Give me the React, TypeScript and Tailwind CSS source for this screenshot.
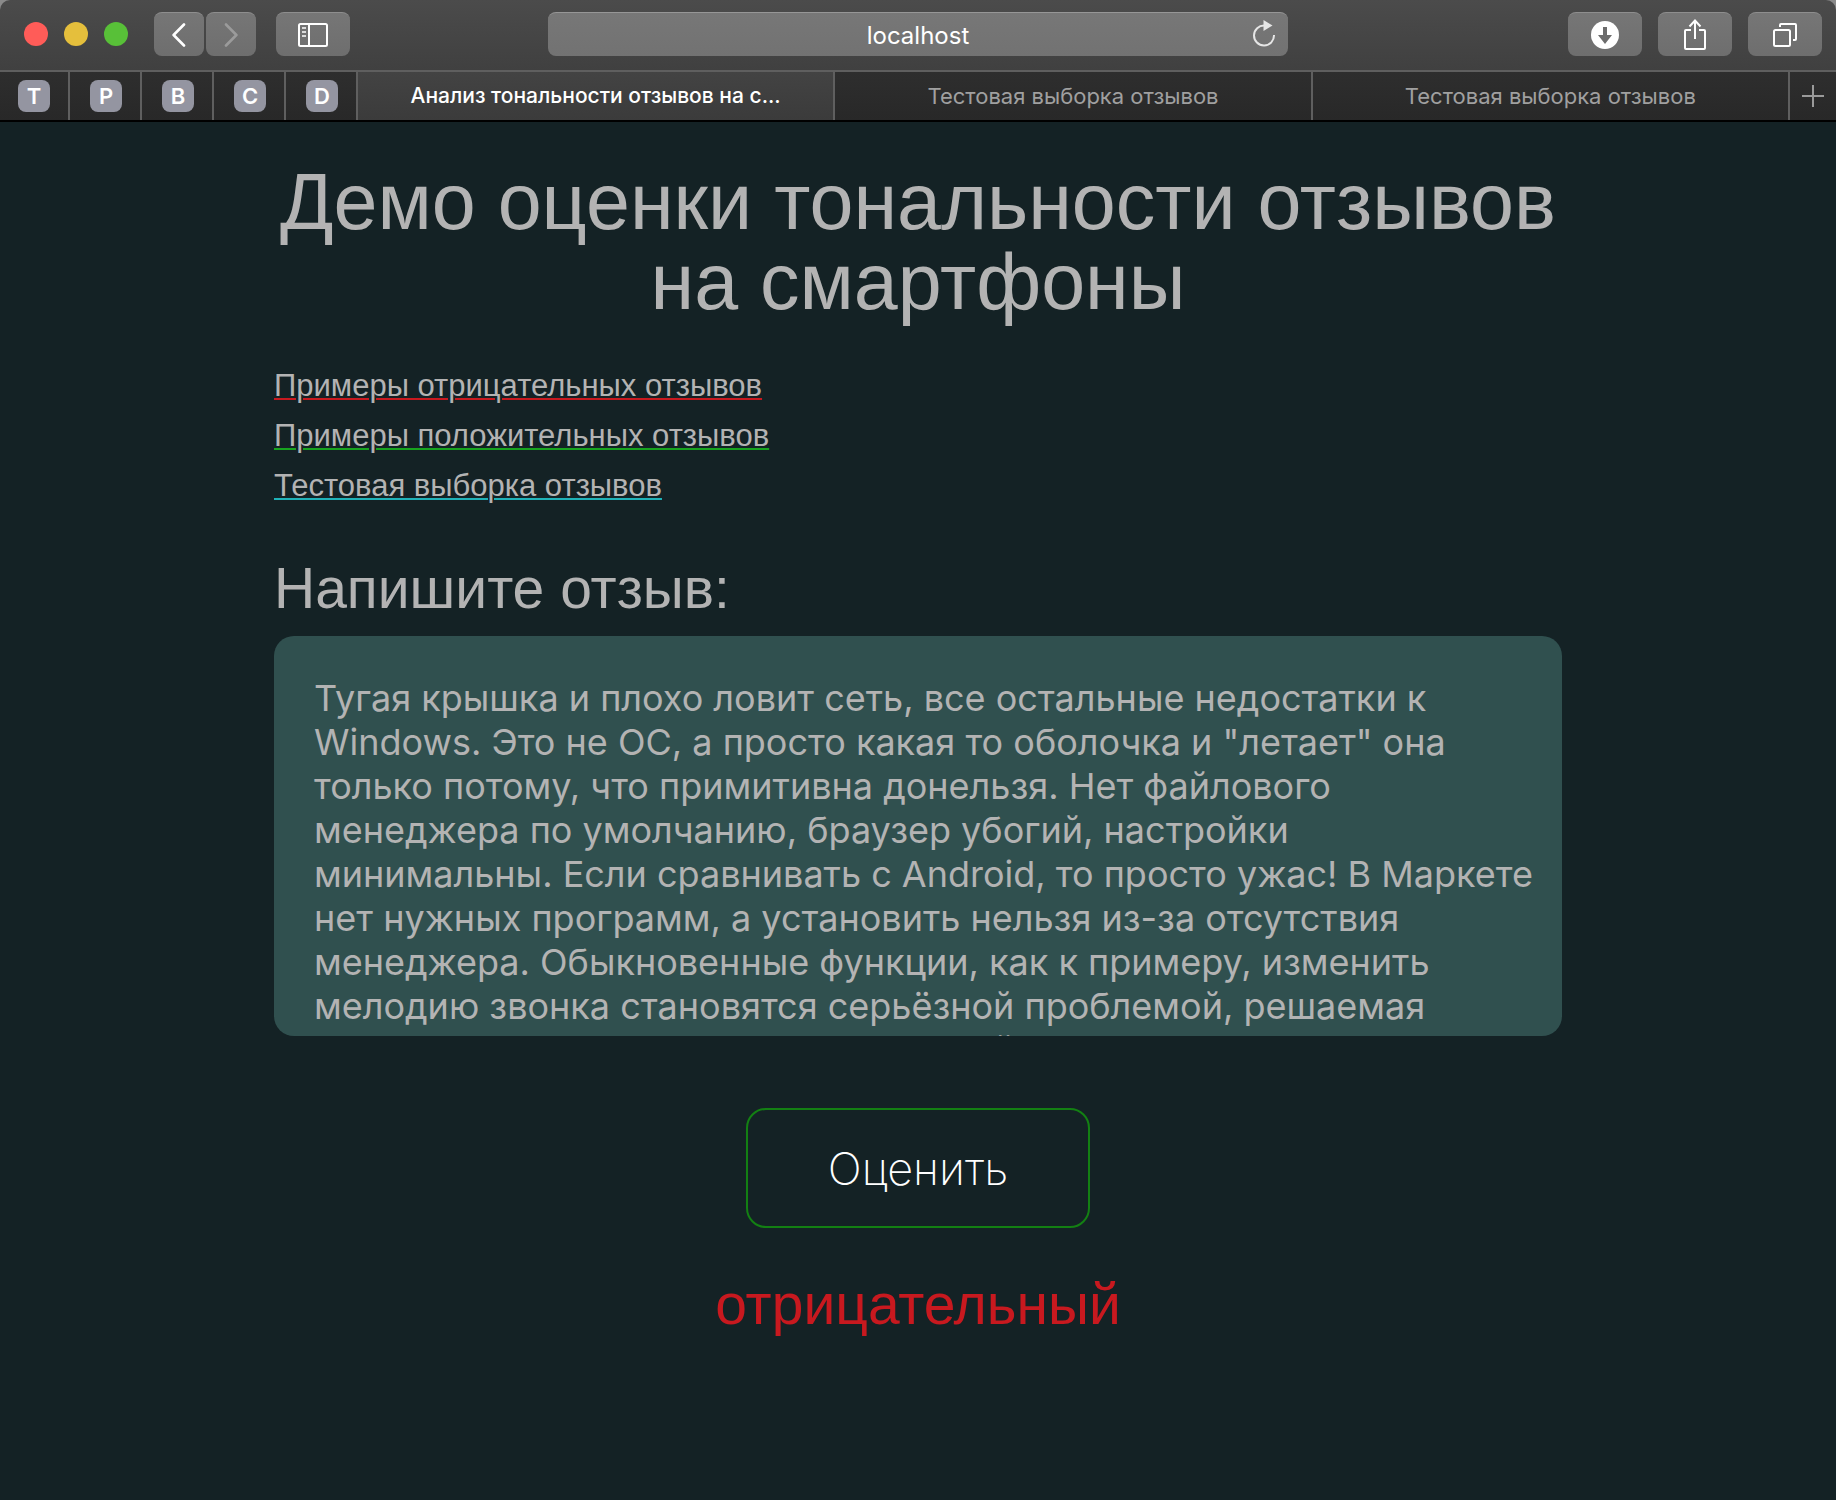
import React, { useState } from "react";

const REVIEW = `Тугая крышка и плохо ловит сеть, все остальные недостатки к Windows. Это не ОС, а просто какая то оболочка и "летает" она только потому, что примитивна донельзя. Нет файлового менеджера по умолчанию, браузер убогий, настройки
минимальны. Если сравнивать с Android, то просто ужас! В Маркете нет нужных программ, а установить нельзя из-за отсутствия менеджера. Обыкновенные функции, как к примеру, изменить мелодию звонка становятся серьёзной проблемой, решаемая исключительно при покупке сторонней программы.`;

const PINNED = ["T", "P", "B", "C", "D"];

const TABS = [
  { title: "Анализ тональности отзывов на с...", active: true },
  { title: "Тестовая выборка отзывов", active: false },
  { title: "Тестовая выборка отзывов", active: false },
];

const LINKS = [
  { text: "Примеры отрицательных отзывов", color: "decoration-[#c8191f]" },
  { text: "Примеры положительных отзывов", color: "decoration-[#17a31f]" },
  { text: "Тестовая выборка отзывов", color: "decoration-[#1fb2b8]" },
];

function ToolButton({
  label,
  width,
  children,
}: {
  label: string;
  width: string;
  children: React.ReactNode;
}) {
  return (
    <button
      type="button"
      aria-label={label}
      className={`flex h-11 ${width} shrink-0 items-center justify-center rounded-lg border-t border-[#8e8e8e] bg-linear-to-b from-[#767676] to-[#6e6e6e] text-white`}
    >
      {children}
    </button>
  );
}

function Toolbar() {
  return (
    <div className="grid h-[70px] grid-cols-[1fr_minmax(0,740px)_1fr] items-start bg-linear-to-b from-[#4b4b4b] to-[#404040] pt-3">
      <div className="flex items-center">
        <div className="flex gap-4 pl-6">
          <button type="button" aria-label="Закрыть" className="size-6 rounded-full bg-[#ff5c58]" />
          <button type="button" aria-label="Свернуть" className="size-6 rounded-full bg-[#e5bf3c]" />
          <button type="button" aria-label="Развернуть" className="size-6 rounded-full bg-[#58c038]" />
        </div>
        <div className="ml-[26px] flex gap-0.5">
          <ToolButton label="Назад" width="w-[50px]">
            <svg width="14" height="24" viewBox="0 0 14 24" fill="none" stroke="currentColor" strokeWidth="2.6" strokeLinecap="round" strokeLinejoin="round">
              <path d="M12 1.5 1.6 12 12 22.5" />
            </svg>
          </ToolButton>
          <ToolButton label="Вперёд" width="w-[50px]">
            <svg width="14" height="24" viewBox="0 0 14 24" fill="none" stroke="#9b9b9b" strokeWidth="2.6" strokeLinecap="round" strokeLinejoin="round">
              <path d="M2 1.5 12.4 12 2 22.5" />
            </svg>
          </ToolButton>
        </div>
        <div className="ml-5">
          <ToolButton label="Боковая панель" width="w-[74px]">
            <svg width="30" height="24" viewBox="0 0 30 24" fill="none" stroke="currentColor" strokeWidth="2">
              <rect x="1" y="1" width="28" height="22" rx="1.5" />
              <path d="M11 1v22" />
              <path d="M4 5h4M4 9h4M4 13h4" stroke="#dcdcdc" />
            </svg>
          </ToolButton>
        </div>
      </div>

      <div className="relative h-11">
        <input
          aria-label="Адрес"
          defaultValue="localhost"
          className="h-11 w-full rounded-lg border-t border-[#969696] bg-linear-to-b from-[#777777] to-[#727272] pt-0.5 text-center text-2xl text-white outline-none"
        />
        <button type="button" aria-label="Обновить" className="absolute top-2 right-3">
          <svg width="24" height="28" viewBox="0 0 24 28" fill="none">
            <path d="M12.5 5.5A10 10 0 1 0 22 15" stroke="#e6e6e6" strokeWidth="2" />
            <path d="M11.5 0v11L20.5 5.5z" fill="#e6e6e6" />
          </svg>
        </button>
      </div>

      <div className="flex justify-end gap-4 pr-3.5">
        <ToolButton label="Загрузки" width="w-[74px]">
          <svg width="28" height="28" viewBox="0 0 28 28">
            <circle cx="14" cy="14" r="14" fill="#fff" />
            <path d="M12 6h4v8h5l-7 9-7-9h5z" fill="#6c6c6c" />
          </svg>
        </ToolButton>
        <ToolButton label="Поделиться" width="w-[74px]">
          <svg width="24" height="32" viewBox="0 0 24 32" fill="none" stroke="currentColor" strokeWidth="2">
            <path d="M8 11H3a1 1 0 0 0-1 1v17a1 1 0 0 0 1 1h18a1 1 0 0 0 1-1V12a1 1 0 0 0-1-1h-5" />
            <path d="M12 20V1.5M6.5 7.5 12 1.5l5.5 6" />
          </svg>
        </ToolButton>
        <ToolButton label="Показать все вкладки" width="w-[74px]">
          <svg width="24" height="24" viewBox="0 0 24 24" fill="none" stroke="currentColor" strokeWidth="2">
            <rect x="1" y="7" width="16" height="16" rx="1.5" />
            <path d="M7 4V2a1 1 0 0 1 1-1h14a1 1 0 0 1 1 1v14a1 1 0 0 1-1 1h-2" />
          </svg>
        </ToolButton>
      </div>
    </div>
  );
}

function TabStrip() {
  return (
    <div className="flex h-[50px] border-t-2 border-[#5f5f5f] bg-linear-to-b from-[#2e2e2e] to-[#282828]">
      {PINNED.map((letter, i) => (
        <button
          key={letter}
          type="button"
          className={`flex shrink-0 items-center border-r-2 border-[#5f5f5f] ${i === 0 ? "w-[70px] pl-[18px]" : "w-[72px] pl-5"}`}
        >
          <span className="flex size-8 items-center justify-center rounded-lg bg-[#9495a1] text-[22px] font-semibold text-white">
            {letter}
          </span>
        </button>
      ))}
      {TABS.map((tab, i) => (
        <button
          key={i}
          type="button"
          className={`min-w-0 flex-1 truncate border-r-2 border-[#5f5f5f] px-4 ${
            tab.active
              ? "bg-linear-to-b from-[#434343] to-[#3b3b3b] text-[21px] font-medium text-white"
              : "text-[22px] text-[#a0a0a0]"
          }`}
        >
          {tab.title}
        </button>
      ))}
      <button type="button" aria-label="Новая вкладка" className="flex w-[46px] shrink-0 items-center justify-center">
        <svg width="22" height="22" viewBox="0 0 22 22" stroke="#9a9a9a" strokeWidth="2">
          <path d="M11 0v22M0 11h22" />
        </svg>
      </button>
    </div>
  );
}

export default function App() {
  const [review, setReview] = useState(REVIEW);

  return (
    <div className="min-h-screen bg-[#142225] font-['Inter',sans-serif]">
      <header className="border-b-2 border-black bg-[#8a8a8a]">
        <div className="overflow-hidden rounded-t-[10px]">
          <Toolbar />
          <TabStrip />
        </div>
      </header>

      <main className="mx-auto flex w-full max-w-[1288px] flex-col pt-10 font-['Liberation_Sans',sans-serif] text-[#b3b3b3]">
        <h1 className="text-center text-[79px] leading-[80px]">
          Демо оценки тональности отзывов на смартфоны
        </h1>

        <nav className="mt-[39px] flex flex-col items-start">
          {LINKS.map((link) => (
            <a
              key={link.text}
              href="#"
              className={`text-[31px] leading-[50px] underline decoration-2 underline-offset-2 ${link.color}`}
            >
              {link.text}
            </a>
          ))}
        </nav>

        <form className="flex flex-col" onSubmit={(e) => e.preventDefault()}>
          <label htmlFor="review" className="mt-[41px] text-[57px] leading-[72px]">
            Напишите отзыв:
          </label>
          <textarea
            id="review"
            value={review}
            onChange={(e) => setReview(e.target.value)}
            className="mt-3 h-[400px] w-full resize-none overflow-hidden rounded-[20px] bg-[#30504f] p-10 pr-6 font-['Inter',sans-serif] text-4xl leading-[44px] outline-none"
          />
          <button
            type="submit"
            className="mt-18 h-[120px] self-center rounded-[20px] border-2 border-[#138013] px-20 pt-0.5 font-['Inter',sans-serif] text-[45px] leading-[60px] font-extralight text-white"
          >
            Оценить
          </button>
          <output htmlFor="review" className="mt-10 text-center text-[57px] leading-[72px] text-[#c8191f]">
            отрицательный
          </output>
        </form>
      </main>
    </div>
  );
}
